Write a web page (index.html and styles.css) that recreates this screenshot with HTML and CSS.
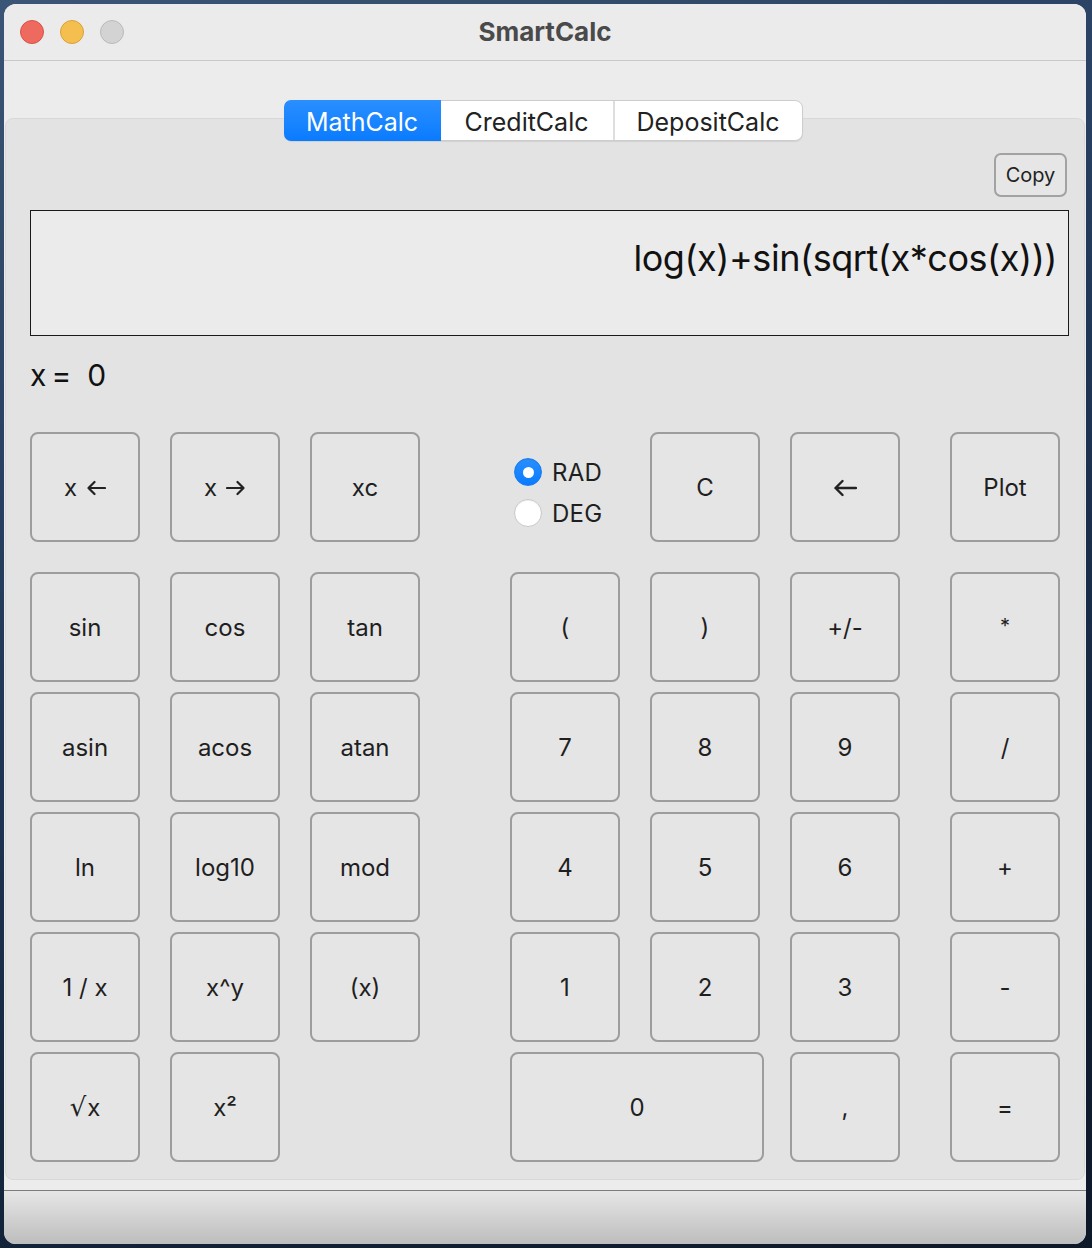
FILE: index.html
```html
<!DOCTYPE html>
<html lang="en">
<head>
<meta charset="utf-8">
<title>SmartCalc</title>
<link rel="stylesheet" href="styles.css">
</head>
<body>
<div class="window">
  <header class="titlebar">
    <div class="lights">
      <span class="light red"></span>
      <span class="light yellow"></span>
      <span class="light gray"></span>
    </div>
    <div class="title">SmartCalc</div>
    <div></div>
  </header>
  <main class="content">
    <nav class="tabs">
      <span class="tab tab-math active">MathCalc</span>
      <span class="tab tab-credit">CreditCalc</span>
      <span class="tab tab-deposit">DepositCalc</span>
    </nav>
    <section class="panel">
      <div class="toolbar"><button class="copy">Copy</button></div>
      <div class="display">log(x)+sin(sqrt(x*cos(x)))</div>
      <div class="xline"><span>x</span><span class="eq">=</span><span class="val">0</span></div>
      <div class="keys">
        <button class="key">x<svg class="arrow-sm" width="20" height="16" viewBox="0 0 20 16"><path d="M19 8H2.5M8.5 2L2.5 8l6 6" fill="none" stroke="#222" stroke-width="2.2" stroke-linecap="round" stroke-linejoin="round"/></svg></button>
        <button class="key">x<svg class="arrow-sm" width="20" height="16" viewBox="0 0 20 16"><path d="M1 8h16.5M11.5 2l6 6-6 6" fill="none" stroke="#222" stroke-width="2.2" stroke-linecap="round" stroke-linejoin="round"/></svg></button>
        <button class="key">xc</button>
        <div class="radios r">
          <label class="radio"><span class="dot on"></span>RAD</label>
          <label class="radio"><span class="dot"></span>DEG</label>
        </div>
        <button class="key">C</button>
        <button class="key"><svg class="arrow-lg" width="24" height="18" viewBox="0 0 24 18"><path d="M23 9H2.5M9.5 2L2.5 9l7 7" fill="none" stroke="#222" stroke-width="2.4" stroke-linecap="round" stroke-linejoin="round"/></svg></button>
        <button class="key op">Plot</button>

        <button class="key">sin</button>
        <button class="key">cos</button>
        <button class="key">tan</button>
        <button class="key r">(</button>
        <button class="key">)</button>
        <button class="key">+/-</button>
        <button class="key op star">*</button>

        <button class="key">asin</button>
        <button class="key">acos</button>
        <button class="key">atan</button>
        <button class="key r">7</button>
        <button class="key">8</button>
        <button class="key">9</button>
        <button class="key op">/</button>

        <button class="key">ln</button>
        <button class="key">log10</button>
        <button class="key">mod</button>
        <button class="key r">4</button>
        <button class="key">5</button>
        <button class="key">6</button>
        <button class="key op">+</button>

        <button class="key">1 / x</button>
        <button class="key">x^y</button>
        <button class="key">(x)</button>
        <button class="key r">1</button>
        <button class="key">2</button>
        <button class="key">3</button>
        <button class="key op">-</button>

        <button class="key"><span class="radical">√</span>x</button>
        <button class="key">x²</button>
        <button class="key zero">0</button>
        <button class="key">,</button>
        <button class="key op">=</button>
      </div>
    </section>
  </main>
  <footer class="statusbar"></footer>
</div>
</body>
</html>
```
FILE: styles.css
```css
* { box-sizing: border-box; }

html, body {
  margin: 0;
  padding: 0;
}

body {
  width: 1092px;
  height: 1248px;
  padding: 4px 6px 4px 4px;
  background: linear-gradient(160deg, #3a5575 0%, #22395a 40%, #13233a 75%, #0d1828 100%);
  font-family: Inter, "Noto Sans", sans-serif;
  color: #1f1f1f;
  overflow: hidden;
}

.window {
  width: 1082px;
  height: 1240px;
  border-radius: 12px;
  overflow: hidden;
  display: flex;
  flex-direction: column;
  background: #ececec;
}

.titlebar {
  height: 57px;
  flex: none;
  background: #ebebeb;
  border-bottom: 1px solid #c9c9c9;
  display: grid;
  grid-template-columns: 1fr auto 1fr;
  align-items: center;
}

.lights {
  display: flex;
  gap: 16px;
  padding-left: 16px;
}

.light {
  width: 24px;
  height: 24px;
  border-radius: 50%;
  display: block;
}
.light.red { background: #ee6a5f; border: 1px solid #d65447; }
.light.yellow { background: #f5bf4f; border: 1px solid #d9a13a; }
.light.gray { background: #d3d3d3; border: 1px solid #bababa; }

.title {
  font-weight: 700;
  font-size: 26px;
  color: #4a4a4a;
  margin-top: -2px;
}

.content {
  flex: 1;
  display: flex;
  flex-direction: column;
  padding-top: 39px;
  padding-bottom: 10px;
  background: #ececec;
}

.tabs {
  align-self: center;
  display: flex;
  height: 41px;
  position: relative;
  z-index: 1;
  margin-left: -4px;
  background: #ffffff;
  border: 1px solid #cdcdcd;
  border-radius: 8px;
  box-shadow: 0 1px 1px rgba(0,0,0,0.08);
}

.tab {
  display: flex;
  align-items: center;
  justify-content: center;
  font-size: 25px;
  color: #222;
  height: 100%;
  padding-top: 2px;
}
.tab-math { width: 157px; }
.tab-credit { width: 172px; }
.tab-deposit { width: 189px; border-left: 2px solid #dedede; }

.tab.active {
  color: #fff;
  background: linear-gradient(#2a8fff, #0a7bff);
  border-radius: 7px 0 0 7px;
  margin: -1px 0 -1px -1px;
  height: calc(100% + 2px);
}

.panel {
  flex: 1;
  margin: -23px 1px 0 1px;
  background: #e3e3e3;
  border: 1px solid #d8d8d8;
  border-radius: 8px;
  padding: 34px 15px 0 24px;
  display: flex;
  flex-direction: column;
}

.toolbar {
  display: flex;
  justify-content: flex-end;
  padding-right: 2px;
}

.copy {
  width: 73px;
  height: 44px;
  border: 2px solid #a2a2a2;
  border-radius: 7px;
  background: #e6e6e6;
  font-family: inherit;
  font-size: 20px;
  color: #222;
  padding: 0 0 1px 0;
}

.display {
  margin-top: 13px;
  height: 126px;
  border: 1px solid #1a1a1a;
  background: #ebebeb;
  text-align: right;
  padding: 24px 11px 0 0;
  font-size: 36px;
  line-height: 46px;
  letter-spacing: -0.45px;
  color: #111;
}

.xline {
  margin-top: 19px;
  height: 40px;
  line-height: 40px;
  font-size: 30px;
  display: flex;
  color: #111;
}
.xline .eq { margin-left: 5px; }
.xline .val { margin-left: 16px; }

.keys {
  margin-top: 37px;
  display: grid;
  grid-template-columns: 110px 110px 110px 30px 110px 110px 110px 130px;
  grid-template-rows: 130px repeat(5, 110px);
  column-gap: 30px;
  row-gap: 10px;
  align-items: start;
}

.key {
  width: 110px;
  height: 110px;
  border: 2px solid #9d9d9d;
  border-radius: 8px;
  background: #e5e5e5;
  font-family: inherit;
  font-size: 24px;
  color: #1f1f1f;
  padding: 0;
  display: flex;
  align-items: center;
  justify-content: center;
}

.arrow-sm { margin-left: 9px; margin-top: 1px; }
.arrow-lg { margin-top: 1px; }

.radical {
  font-family: "DejaVu Sans", sans-serif;
  font-size: 26px;
  margin-right: 1px;
}

.r { grid-column-start: 5; }
.op { justify-self: end; }
.star { font-size: 20px; padding-bottom: 3px; }
.zero { grid-column: 5 / span 2; width: 254px; }

.radios {
  height: 110px;
  display: flex;
  flex-direction: column;
  justify-content: center;
  gap: 13px;
  padding-left: 4px;
  padding-top: 11px;
}

.radio {
  display: flex;
  align-items: center;
  gap: 10px;
  font-size: 24px;
  color: #1f1f1f;
  height: 28px;
  letter-spacing: 0.3px;
}

.dot {
  width: 28px;
  height: 28px;
  border-radius: 50%;
  background: #fff;
  border: 1px solid #c8c8c8;
  box-shadow: inset 0 1px 1px rgba(0,0,0,0.05);
  display: flex;
  align-items: center;
  justify-content: center;
}

.dot.on {
  background: linear-gradient(#2a8fff, #0a7bff);
  border-color: #1a7cf0;
}
.dot.on::after {
  content: "";
  width: 11px;
  height: 11px;
  border-radius: 50%;
  background: #fff;
}

.statusbar {
  height: 54px;
  flex: none;
  border-top: 1px solid #7d7d7d;
  background: linear-gradient(#e6e6e6, #bdbdbd);
}
```
